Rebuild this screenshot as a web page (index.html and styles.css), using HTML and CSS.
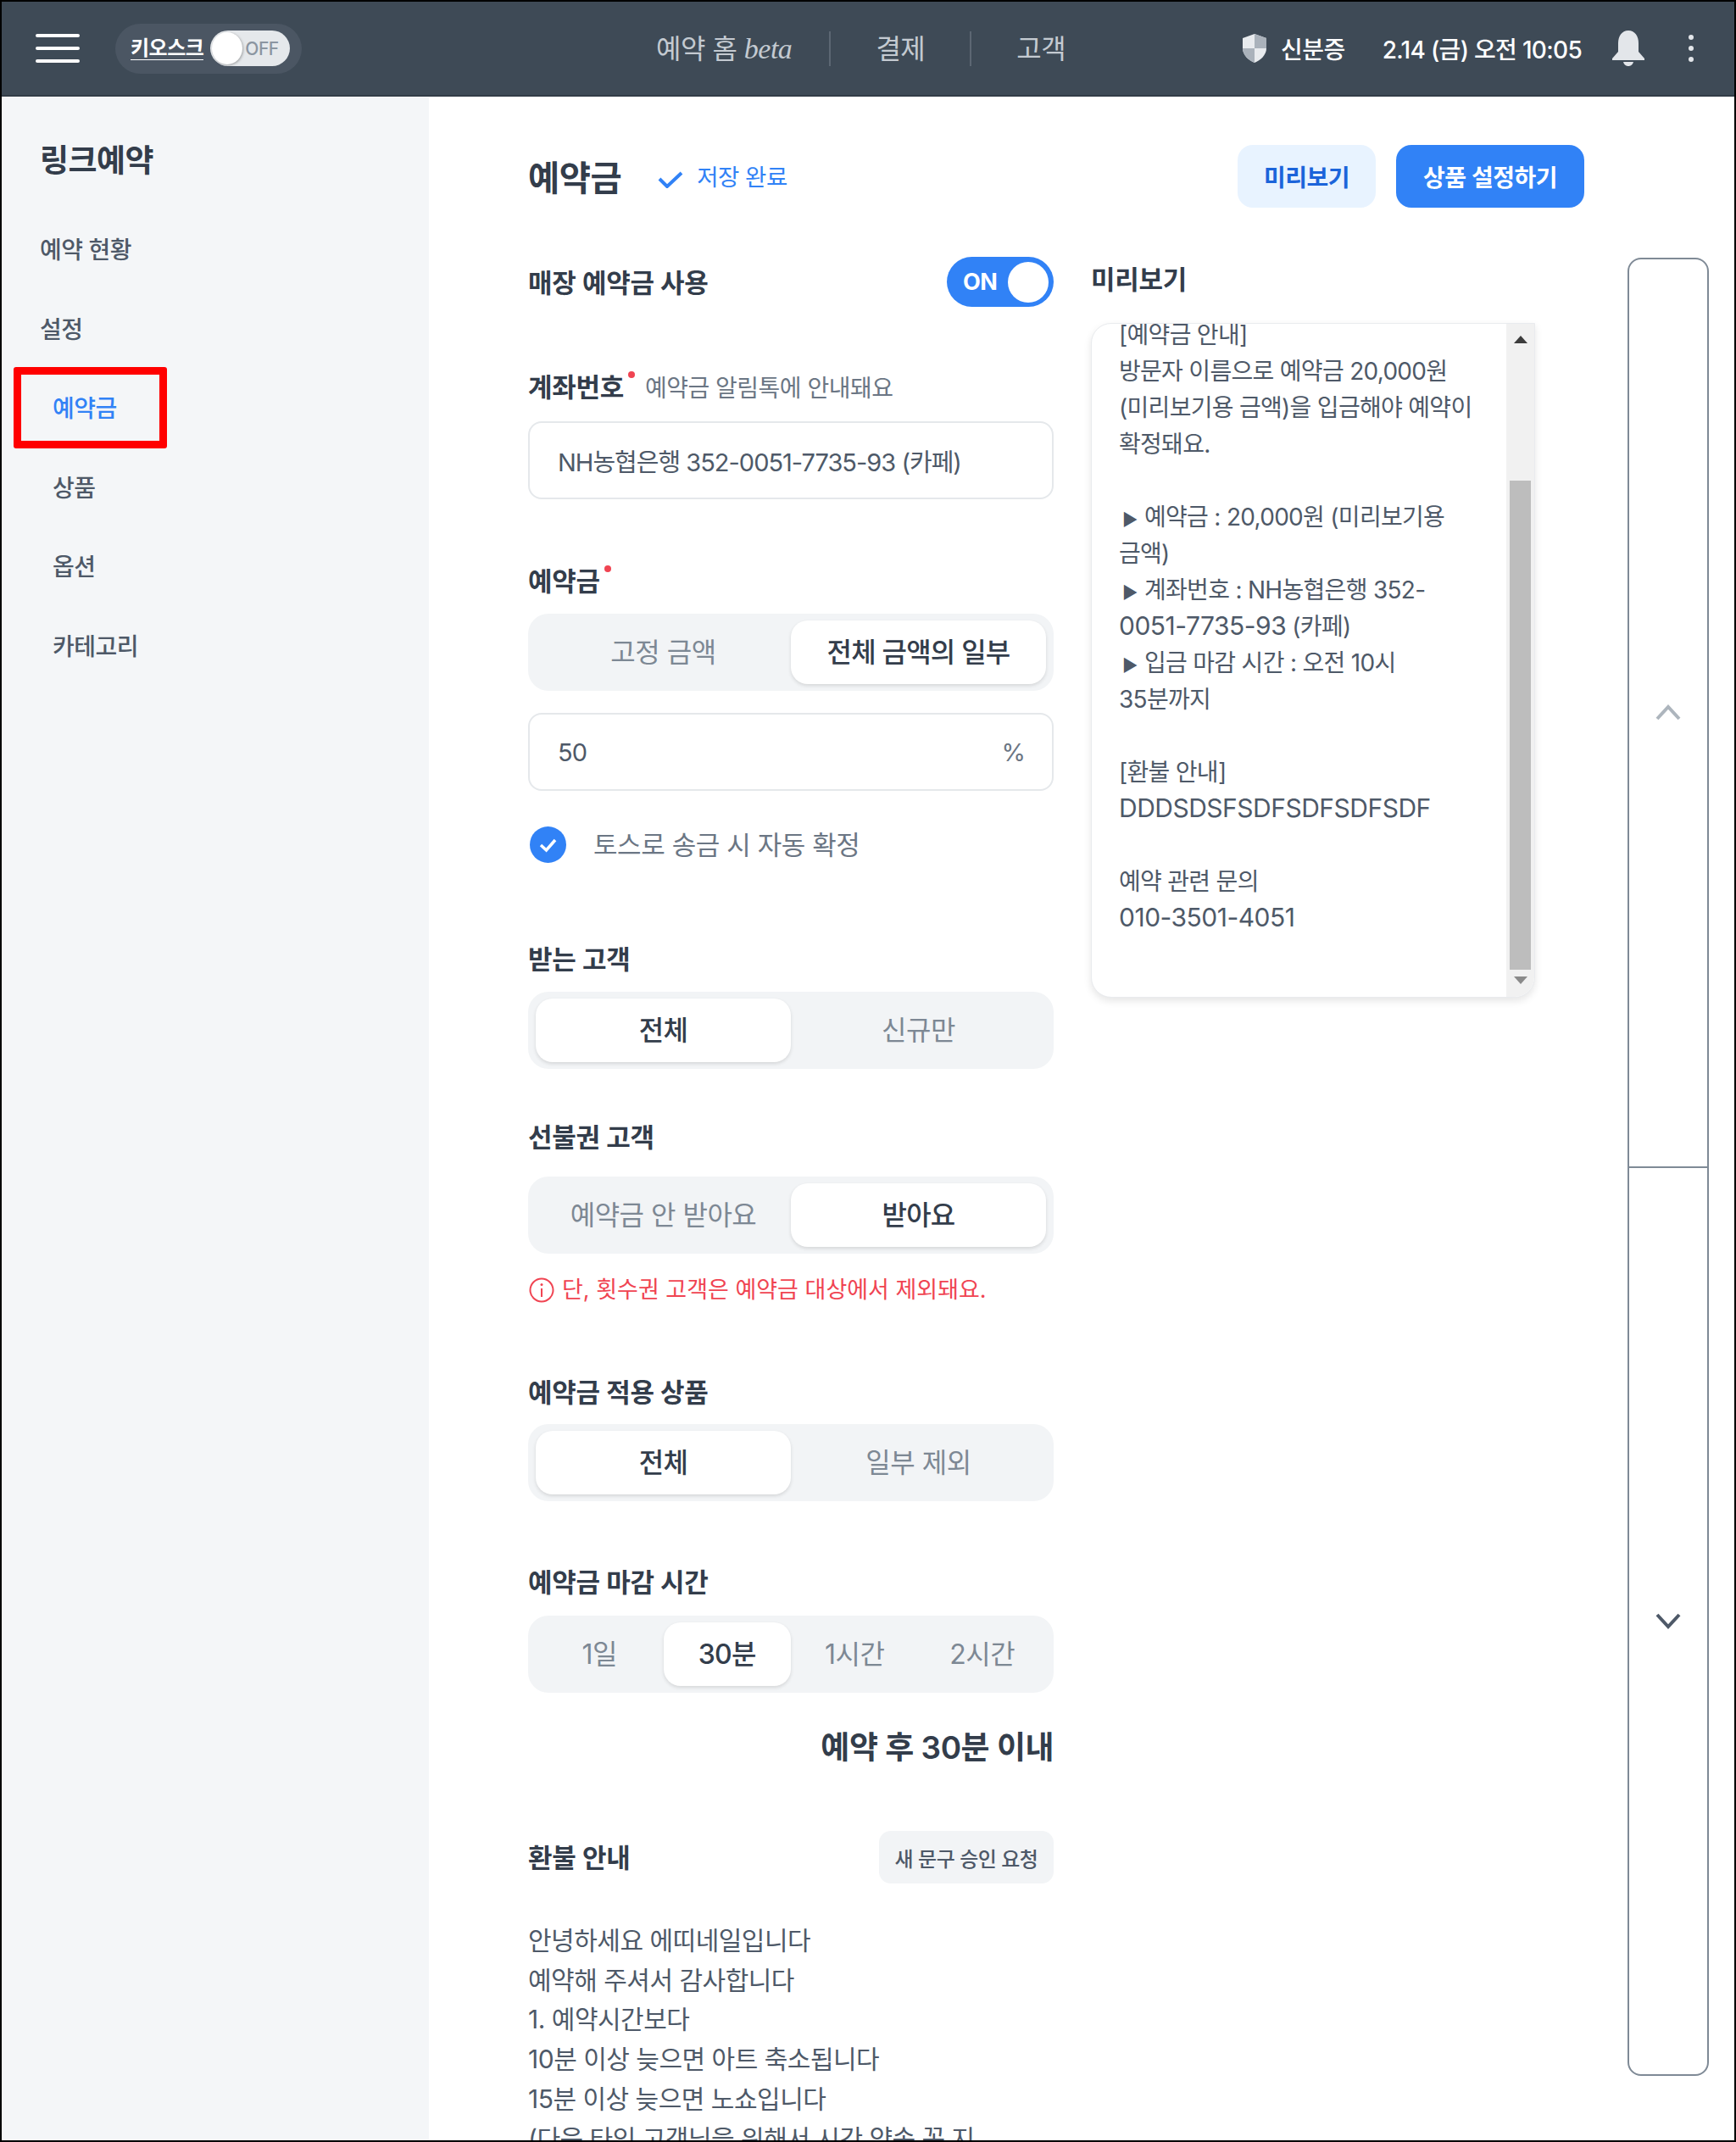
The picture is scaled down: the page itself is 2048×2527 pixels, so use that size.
FILE: index.html
```html
<!DOCTYPE html>
<html lang="ko">
  <head>
    <meta charset="utf-8">
    <title>예약금</title>
    <link rel="stylesheet" href="styles.css">
  </head>

  <body>
    <header class="topbar">
      <div class="menuIcon"><span></span><span></span><span></span></div>
      <div class="kiosk">
        <span class="kioskLabel">키오스크</span>
        <span class="kioskSwitch"><i></i><b>OFF</b></span>
      </div>
      <nav class="topNav">
        <a>예약 홈 <em>beta</em></a>
        <a>결제</a>
        <a>고객</a>
      </nav>
      <div class="topRight">
        <svg class="shield" viewBox="0 0 32 34">
          <path d="M16 0 L30 5 V17 C30 25 23 31 16 34 C9 31 2 25 2 17 V5 Z" fill="#e8ebee"/>
          <path d="M16 0 L30 5 V17 H16 Z M16 17 V34 C9 31 2 25 2 17 Z" fill="#aab2bb"/>
        </svg>
        <span class="idText">신분증</span>
        <span class="dateText">2.14 (금) 오전 10:05</span>
        <svg class="bell" viewBox="0 0 38 42">
          <path d="M19 0 C27 0 31 7 31 15 V25 L38 33 V35 H0 V33 L7 25 V15 C7 7 11 0 19 0 Z" fill="#e3e6ea"/>
          <path d="M13 37 H25 C24 41 21 42 19 42 C17 42 14 41 13 37 Z" fill="#e3e6ea"/>
        </svg>
        <div class="kebab"><span></span><span></span><span></span></div>
      </div>
    </header>

    <div class="page">
      <aside class="sidebar">
        <h2>링크예약</h2>
        <a class="sideItem">예약 현황</a>
        <a class="sideItem">설정</a>
        <a class="sideItem sub current">예약금</a>
        <a class="sideItem sub">상품</a>
        <a class="sideItem sub">옵션</a>
        <a class="sideItem sub">카테고리</a>
      </aside>

      <main class="main">
        <div class="content">
          <div class="titleRow">
            <h1>예약금</h1>
            <svg class="savedCheck" viewBox="0 0 30 20"><path d="M2 9 L11 18 L28 2" fill="none" stroke="#3182f6" stroke-width="4"/></svg>
            <span class="savedText">저장 완료</span>
            <button class="btn light">미리보기</button>
            <button class="btn primary">상품 설정하기</button>
          </div>

          <div class="columns">
            <section class="formCol">
              <div class="useRow">
                <span class="label">매장 예약금 사용</span>
                <span class="onSwitch"><b>ON</b><i></i></span>
              </div>

              <div class="label gapAccount">계좌번호<sup class="dot"></sup><small>예약금 알림톡에 안내돼요</small></div>
              <div class="input mt19">NH농협은행 352-0051-7735-93 (카페)</div>

              <div class="label gapAmount">예약금<sup class="dot"></sup></div>
              <div class="segment mt18">
                <span>고정 금액</span>
                <span class="on">전체 금액의 일부</span>
              </div>
              <div class="input mt26"><span>50</span><span class="unit">%</span></div>
              <div class="checkRow">
                <svg class="checkIcon" viewBox="0 0 43 43">
                  <circle cx="21.5" cy="21.5" r="21.5" fill="#3182f6"/>
                  <path d="M13 22 L19.5 28 L30 16" fill="none" stroke="#fff" stroke-width="3.5"/>
                </svg>
                토스로 송금 시 자동 확정
              </div>

              <div class="label gapTarget">받는 고객</div>
              <div class="segment mt18">
                <span class="on">전체</span>
                <span>신규만</span>
              </div>

              <div class="label gapPrepaid">선불권 고객</div>
              <div class="segment mt26">
                <span>예약금 안 받아요</span>
                <span class="on">받아요</span>
              </div>
              <div class="errorRow">
                <svg class="infoIcon" viewBox="0 0 30 30">
                  <circle cx="15" cy="15" r="13.5" fill="none" stroke="#f04452" stroke-width="2"/>
                  <path d="M15 13 V23" stroke="#f04452" stroke-width="2"/>
                  <circle cx="15" cy="8.5" r="1.5" fill="#f04452"/>
                </svg>
                단, 횟수권 고객은 예약금 대상에서 제외돼요.
              </div>

              <div class="label gapProduct">예약금 적용 상품</div>
              <div class="segment mt17">
                <span class="on">전체</span>
                <span>일부 제외</span>
              </div>

              <div class="label gapDeadline">예약금 마감 시간</div>
              <div class="segment mt19">
                <span>1일</span>
                <span class="on">30분</span>
                <span>1시간</span>
                <span>2시간</span>
              </div>
              <div class="deadlineText">예약 후 30분 이내</div>

              <div class="refundRow">
                <span class="label">환불 안내</span>
                <button class="btn small">새 문구 승인 요청</button>
              </div>
              <p class="refundText">안녕하세요 에띠네일입니다<br>예약해 주셔서 감사합니다<br>1. 예약시간보다<br>10분 이상 늦으면 아트 축소됩니다<br>15분 이상 늦으면 노쇼입니다<br>(다음 타임 고객님을 위해서 시간 약속 꼭 지</p>
            </section>

            <section class="previewCol">
              <div class="label previewHead">미리보기</div>
              <div class="previewBox">
                <div class="previewText">[예약금 안내]<br>방문자 이름으로 예약금 20,000원<br>(미리보기용 금액)을 입금해야 예약이<br>확정돼요.<br><br><span class="tri">►</span>예약금 : 20,000원 (미리보기용<br>금액)<br><span class="tri">►</span>계좌번호 : NH농협은행 352-<br><span class="latin">0051-7735-93</span> (카페)<br><span class="tri">►</span>입금 마감 시간 : 오전 10시<br>35분까지<br><br>[환불 안내]<br><span class="latin">DDDSDSFSDFSDFSDFSDF</span><br><br>예약 관련 문의<br><span class="latin">010-3501-4051</span></div>
                <div class="scrollbar">
                  <svg class="scrollArrow up" viewBox="0 0 16 9"><path d="M8 0 L16 9 H0 Z" fill="#3c3c3c"/></svg>
                  <div class="scrollTrack"><div class="scrollThumb"></div></div>
                  <svg class="scrollArrow down" viewBox="0 0 16 9"><path d="M0 0 H16 L8 9 Z" fill="#8a8a8a"/></svg>
                </div>
              </div>
            </section>
          </div>
        </div>

        <div class="rail">
          <div class="railBtn">
            <svg viewBox="0 0 30 19"><path d="M2 17 L15 3 L28 17" fill="none" stroke="#adb5bd" stroke-width="4"/></svg>
          </div>
          <div class="railBtn">
            <svg viewBox="0 0 30 19"><path d="M2 2 L15 16 L28 2" fill="none" stroke="#4e5968" stroke-width="4"/></svg>
          </div>
        </div>
      </main>
    </div>
  </body>
</html>
```

FILE: styles.css
```css
* {
  box-sizing: border-box;
}

html, body {
  margin: 0;
  padding: 0;
}

body {
  width: 2048px;
  height: 2527px;
  border: 2px solid #000;
  overflow: hidden;
  background: #fff;
  color: #333d4b;
  font-family: Inter, "Noto Sans CJK KR", sans-serif;
  letter-spacing: -0.5px;
}

/* top bar */
.topbar {
  display: flex;
  align-items: center;
  height: 112px;
  padding: 0 0 0 40px;
  background: #3e4a56;
  border-bottom: 2px solid #323c47;
  color: #fff;
}

.menuIcon {
  display: flex;
  flex-direction: column;
  gap: 11px;
  width: 52px;
}

.menuIcon span {
  height: 4px;
  background: #fff;
  border-radius: 2px;
}

.kiosk {
  display: flex;
  align-items: center;
  gap: 8px;
  width: 220px;
  height: 59px;
  margin-left: 42px;
  padding-left: 18px;
  background: #4b5663;
  border-radius: 30px;
}

.kioskLabel {
  font-size: 24px;
  font-weight: 700;
  border-bottom: 1px solid #fff;
  line-height: 26px;
}

.kioskSwitch {
  display: flex;
  align-items: center;
  width: 94px;
  height: 42px;
  padding: 0 2px;
  background: #e5e8eb;
  border-radius: 21px;
}

.kioskSwitch i {
  width: 36px;
  height: 38px;
  background: #fff;
  border-radius: 50%;
  box-shadow: 1px 1px 3px rgba(0, 0, 0, 0.3);
}

.kioskSwitch b {
  margin-left: 3px;
  font-size: 21px;
  font-weight: 500;
  color: #8b95a1;
}

.topNav {
  display: flex;
  align-items: center;
  margin-left: 418px;
  font-size: 32px;
  color: #c4cad1;
}

.topNav a {
  display: block;
  padding: 0 53px;
  line-height: 41px;
  border-left: 2px solid #5c6773;
}

.topNav a:first-child {
  padding-left: 0;
  padding-right: 44px;
  border-left: none;
}

.topNav em {
  font-family: "Liberation Serif", serif;
  font-size: 34px;
}

.topRight {
  display: flex;
  align-items: center;
  margin-left: auto;
  font-size: 28px;
  font-weight: 500;
}

.shield {
  width: 32px;
  height: 34px;
}

.idText {
  margin-left: 15px;
}

.dateText {
  margin-left: 44px;
  letter-spacing: -0.7px;
}

.bell {
  width: 38px;
  height: 42px;
  margin-left: 36px;
}

.kebab {
  display: flex;
  flex-direction: column;
  gap: 7px;
  margin: 0 48px 0 52px;
}

.kebab span {
  width: 6px;
  height: 6px;
  background: #e3e6ea;
  border-radius: 50%;
}

/* sidebar */
.page {
  display: flex;
  height: 2411px;
}

.sidebar {
  width: 504px;
  margin-top: 1px;
  padding-top: 51px;
  background: #f4f6f8;
}

.sidebar h2 {
  margin: 0 0 35px 45px;
  font-size: 37px;
  line-height: 48px;
  font-weight: 700;
  color: #333d4b;
}

.sideItem {
  display: block;
  position: relative;
  height: 93.5px;
  padding-left: 45px;
  font-size: 28px;
  font-weight: 500;
  line-height: 93.5px;
  color: #4e5968;
}

.sideItem.sub {
  padding-left: 60px;
}

.sideItem.current {
  color: #3182f6;
}

.sideItem.current::after {
  content: "";
  box-sizing: border-box;
  position: absolute;
  left: 14px;
  top: -3px;
  width: 181px;
  height: 96px;
  border: 9px solid #ff0000;
  border-radius: 3px;
}

/* main area */
.main {
  display: flex;
  flex: 1;
  padding: 57px 0 0 117px;
}

.content {
  width: 1246px;
}

.titleRow {
  display: flex;
  align-items: center;
  height: 74px;
}

.titleRow h1 {
  margin: 0 0 2px;
  font-size: 40.5px;
  font-weight: 700;
  color: #333d4b;
}

.savedCheck {
  width: 30px;
  height: 20px;
  margin: 8px 0 0 43px;
}

.savedText {
  margin: 0 auto 2px 16px;
  font-size: 27.5px;
  color: #3182f6;
}

.btn {
  border: none;
  font-family: inherit;
  font-weight: 600;
  letter-spacing: inherit;
}

.btn.light,
.btn.primary {
  height: 74px;
  font-size: 28px;
  border-radius: 18px;
}

.btn.light {
  width: 163px;
  margin-right: 24px;
  background: #e8f3ff;
  color: #1b64da;
}

.btn.primary {
  width: 222px;
  background: #3182f6;
  color: #fff;
}

.columns {
  display: flex;
  gap: 44px;
  margin-top: 58px;
}

.formCol {
  width: 620px;
}

.label {
  padding-top: 2px;
  font-size: 31px;
  font-weight: 600;
  line-height: 40px;
  letter-spacing: -0.3px;
  color: #333d4b;
}

.label small {
  margin-left: 12px;
  font-size: 28px;
  font-weight: 400;
  letter-spacing: -0.5px;
  color: #6b7684;
}

.dot {
  display: inline-block;
  width: 8px;
  height: 8px;
  margin-left: 5px;
  vertical-align: 22px;
  background: #f04452;
  border-radius: 50%;
}

.useRow {
  display: flex;
  align-items: center;
  justify-content: space-between;
  height: 59px;
}

.onSwitch {
  display: flex;
  align-items: center;
  justify-content: space-between;
  width: 126px;
  height: 59px;
  padding: 0 6px 0 19px;
  background: #3182f6;
  border-radius: 30px;
  color: #fff;
  font-size: 27px;
}

.onSwitch i {
  width: 48px;
  height: 48px;
  background: #fff;
  border-radius: 50%;
}

.input {
  display: flex;
  align-items: center;
  justify-content: space-between;
  height: 92px;
  padding: 0 32px 0 33px;
  border: 2px solid #e5e8eb;
  border-radius: 16px;
  font-size: 29px;
  letter-spacing: -1px;
  color: #4e5968;
}

.unit {
  color: #6b7684;
}

.segment {
  display: flex;
  height: 91px;
  padding: 8px 9px;
  background: #f2f4f6;
  border-radius: 24px;
}

.segment span {
  flex: 1;
  font-size: 32px;
  line-height: 75px;
  text-align: center;
  color: #7d8894;
}

.segment .on {
  background: #fff;
  border-radius: 20px;
  box-shadow: 0 2px 4px rgba(0, 0, 0, 0.12);
  color: #333d4b;
  font-weight: 500;
  letter-spacing: -0.8px;
}

.checkRow {
  display: flex;
  align-items: center;
  gap: 32px;
  margin-top: 42px;
  padding-left: 2px;
  font-size: 31px;
  line-height: 43px;
  letter-spacing: -0.4px;
  color: #6b7684;
}

.checkIcon {
  width: 43px;
  height: 43px;
}

.errorRow {
  display: flex;
  align-items: center;
  gap: 9px;
  margin-top: 23px;
  padding-left: 1px;
  font-size: 27px;
  line-height: 40px;
  letter-spacing: 0;
  color: #f04452;
}

.infoIcon {
  width: 30px;
  height: 30px;
}

.mt17 { margin-top: 17px; }
.mt18 { margin-top: 18px; }
.mt19 { margin-top: 19px; }
.mt26 { margin-top: 26px; }

.gapAccount { margin-top: 73px; }
.gapAmount { margin-top: 75px; }
.gapTarget { margin-top: 92px; }
.gapPrepaid { margin-top: 59px; }
.gapProduct { margin-top: 79px; }
.gapDeadline { margin-top: 74px; }

.deadlineText {
  margin-top: 40px;
  font-size: 37px;
  font-weight: 600;
  line-height: 50px;
  text-align: right;
}

.refundRow {
  display: flex;
  align-items: center;
  justify-content: space-between;
  margin-top: 73px;
}

.btn.small {
  width: 206px;
  height: 62px;
  background: #f2f4f6;
  border-radius: 14px;
  font-size: 24px;
  font-weight: 500;
  color: #4e5968;
}

.refundText {
  margin: 44px 0 0;
  font-size: 30px;
  line-height: 46.7px;
  white-space: nowrap;
  color: #4e5968;
}

/* preview */
.previewCol {
  width: 524px;
}

.previewHead {
  margin-top: 5px;
}

.previewBox {
  display: flex;
  height: 796px;
  margin-top: 31px;
  background: #fff;
  border: 1px solid #e9ebee;
  border-radius: 24px 0 24px 24px;
  box-shadow: 0 4px 10px rgba(0, 0, 0, 0.1);
  overflow: hidden;
}

.previewText {
  flex: 1;
  margin-top: -8px;
  padding-left: 32px;
  font-size: 28px;
  line-height: 43px;
  letter-spacing: -0.7px;
  white-space: nowrap;
  color: #4e5968;
}

.tri {
  display: inline-block;
  width: 30px;
  padding-left: 4px;
  font-size: 20px;
  line-height: 0;
}

.latin {
  font-size: 30px;
  line-height: 0;
  letter-spacing: -0.5px;
}

.scrollbar {
  display: flex;
  flex-direction: column;
  align-items: center;
  width: 33px;
  background: #f1f1f1;
}

.scrollArrow {
  flex-shrink: 0;
  width: 16px;
  height: 9px;
}

.scrollArrow.up {
  margin-top: 14px;
}

.scrollArrow.down {
  margin: 10px 0 15px;
}

.scrollTrack {
  flex: 1;
  min-height: 0;
  width: 100%;
}

.scrollThumb {
  width: 25px;
  height: 577px;
  margin: 162px auto 0;
  background: #bdbdbd;
}

/* right rail */
.rail {
  display: flex;
  flex-direction: column;
  width: 96px;
  height: 2145px;
  margin: 133px 0 0 51px;
  border: 2px solid #7f8a96;
  border-radius: 16px;
}

.railBtn {
  display: flex;
  flex: 1;
  align-items: center;
  justify-content: center;
}

.railBtn + .railBtn {
  border-top: 2px solid #7f8a96;
}

.railBtn svg {
  width: 30px;
  height: 19px;
}
```
